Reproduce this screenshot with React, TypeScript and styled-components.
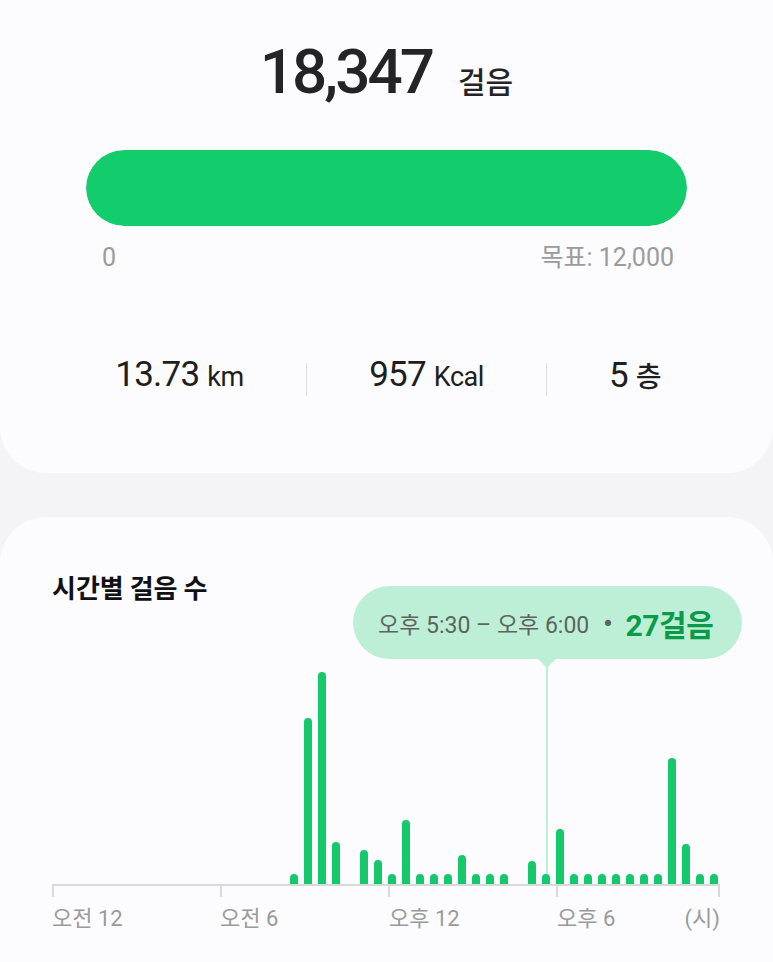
import React from "react";
import styled, { createGlobalStyle } from "styled-components";

const GlobalStyle = createGlobalStyle`
  html, body { margin: 0; padding: 0; background: #f4f4f6; }
  body { font-family: Roboto, "Noto Sans CJK KR", sans-serif; -webkit-font-smoothing: antialiased; }
  * { box-sizing: border-box; }
`;

const Page = styled.div`
  display: flex;
  flex-direction: column;
  gap: 44px;
  width: 773px;
`;

const SummaryCard = styled.section`
  background: #fcfcfe;
  border-radius: 0 0 46px 46px;
  height: 473px;
  padding-top: 41px;
  display: flex;
  flex-direction: column;
`;

const TotalRow = styled.div`
  display: flex;
  justify-content: center;
  align-items: baseline;
  gap: 26px;
  height: 62px;
`;

const TotalNumber = styled.span`
  font-family: Roboto, sans-serif;
  font-size: 62px;
  line-height: 62px;
  font-weight: 500;
  letter-spacing: -3px;
  color: #242426;
`;

const TotalUnit = styled.span`
  font-family: "Noto Sans CJK KR", sans-serif;
  font-size: 30px;
  line-height: 1;
  font-weight: 500;
  color: #242426;
`;

const ProgressTrack = styled.div`
  margin: 47px 86px 0;
  height: 76px;
  border-radius: 38px;
  background: #e4e4e6;
  overflow: hidden;
`;

const ProgressFill = styled.div`
  height: 100%;
  border-radius: 38px;
  background: #13cd6d;
`;

const GoalLabels = styled.div`
  display: flex;
  justify-content: space-between;
  margin: 19px 99px 0 102px;
  font-size: 25px;
  line-height: 25px;
  color: #9b9b9d;
`;

const StatsRow = styled.div`
  display: grid;
  grid-template-columns: 253px 1px 239px 1px 176px;
  padding-left: 53px;
  margin-top: 85px;
  align-items: start;
`;

const Stat = styled.div`
  display: flex;
  justify-content: center;
  align-items: baseline;
  height: 40px;
`;

const StatValue = styled.span`
  font-size: 35px;
  line-height: 40px;
  font-weight: 400;
  letter-spacing: -0.8px;
  color: #1e1e20;
`;

const StatUnit = styled.span<{ $cjk?: boolean }>`
  font-family: ${(p) => (p.$cjk ? '"Noto Sans CJK KR", sans-serif' : "Roboto, sans-serif")};
  font-size: ${(p) => (p.$cjk ? "28px" : "27px")};
  font-weight: ${(p) => (p.$cjk ? 500 : 400)};
  margin-left: 8px;
  letter-spacing: -0.5px;
  color: #1e1e20;
`;

const Divider = styled.div`
  width: 1px;
  height: 33px;
  margin-top: 8px;
  background: #dedee0;
`;

const ChartCard = styled.section`
  position: relative;
  background: #fcfcfe;
  border-radius: 46px 46px 0 0;
  padding: 55px 0 60px;
`;

const SectionTitle = styled.h2`
  margin: 0;
  padding-left: 52px;
  font-family: "Noto Sans CJK KR", sans-serif;
  font-size: 26px;
  line-height: 30px;
  font-weight: 700;
  color: #111113;
`;

const ChartSvg = styled.svg`
  display: block;
`;

const Tooltip = styled.div`
  position: absolute;
  left: 353px;
  top: 69px;
  width: 389px;
  height: 73px;
  border-radius: 37px;
  background: #bdefd6;
  display: flex;
  align-items: center;
  padding-left: 25px;
  white-space: nowrap;

  &::after {
    content: "";
    position: absolute;
    left: 185px;
    top: 100%;
    border-left: 9px solid transparent;
    border-right: 9px solid transparent;
    border-top: 9px solid #bdefd6;
  }
`;

const TooltipTime = styled.span`
  font-size: 23px;
  color: #5d645f;
`;

const TooltipDot = styled.span`
  font-size: 26px;
  font-weight: 700;
  color: #5d645f;
  margin: 0 13px 0 14px;
`;

const TooltipSteps = styled.span`
  font-size: 30px;
  font-weight: 700;
  letter-spacing: -0.5px;
  color: #0b9a4a;
`;

const AxisLabels = styled.div`
  display: grid;
  grid-template-columns: 168px 169px 168px 1fr;
  padding: 0 53px 0 52px;
  margin-top: 6px;
  font-size: 22px;
  line-height: 26px;
  color: #9a9a9c;
`;

const LastAxisCell = styled.div`
  display: flex;
  justify-content: space-between;
`;

const steps: number[] = [
  0, 0, 0, 0, 0, 0, 0, 0, 0, 0, 0, 0, 0, 0, 0, 0, 0, 10, 166, 212, 42, 0, 34, 24,
  10, 64, 10, 10, 10, 29, 10, 10, 10, 0, 23, 10, 55, 10, 10, 10, 10, 10, 10, 10, 126, 40, 10, 10,
];

const BASE = 282;

function barPath(i: number, h: number) {
  const x = 52 + 14 * i;
  const top = BASE - h;
  return `M${x} ${BASE} V${top + 4} A4 4 0 0 1 ${x + 8} ${top + 4} V${BASE} Z`;
}

export default function App() {
  return (
    <>
      <GlobalStyle />
      <Page>
        <SummaryCard>
          <TotalRow>
            <TotalNumber>18,347</TotalNumber>
            <TotalUnit>걸음</TotalUnit>
          </TotalRow>
          <ProgressTrack>
            <ProgressFill style={{ width: `${Math.min(100, (18347 / 12000) * 100)}%` }} />
          </ProgressTrack>
          <GoalLabels>
            <span>0</span>
            <span>목표: 12,000</span>
          </GoalLabels>
          <StatsRow>
            <Stat>
              <StatValue>13.73</StatValue>
              <StatUnit>km</StatUnit>
            </Stat>
            <Divider />
            <Stat>
              <StatValue>957</StatValue>
              <StatUnit>Kcal</StatUnit>
            </Stat>
            <Divider />
            <Stat>
              <StatValue>5</StatValue>
              <StatUnit $cjk>층</StatUnit>
            </Stat>
          </StatsRow>
        </SummaryCard>

        <ChartCard>
          <SectionTitle>시간별 걸음 수</SectionTitle>
          <ChartSvg width={773} height={298} viewBox="0 0 773 298">
            <rect x={546} y={65} width={2} height={217} fill="#bfeed6" />
            <rect x={52} y={282} width={668} height={2} fill="#d9d9db" />
            {[52, 220, 388, 556, 718].map((x) => (
              <rect key={x} x={x} y={282} width={2} height={13} fill="#d9d9db" />
            ))}
            {steps.map((h, i) => (h > 0 ? <path key={i} d={barPath(i, h)} fill="#14c96b" /> : null))}
          </ChartSvg>
          <AxisLabels>
            <span>오전 12</span>
            <span>오전 6</span>
            <span>오후 12</span>
            <LastAxisCell>
              <span>오후 6</span>
              <span>(시)</span>
            </LastAxisCell>
          </AxisLabels>
          <Tooltip>
            <TooltipTime>오후 5:30 – 오후 6:00</TooltipTime>
            <TooltipDot>•</TooltipDot>
            <TooltipSteps>27걸음</TooltipSteps>
          </Tooltip>
        </ChartCard>
      </Page>
    </>
  );
}
